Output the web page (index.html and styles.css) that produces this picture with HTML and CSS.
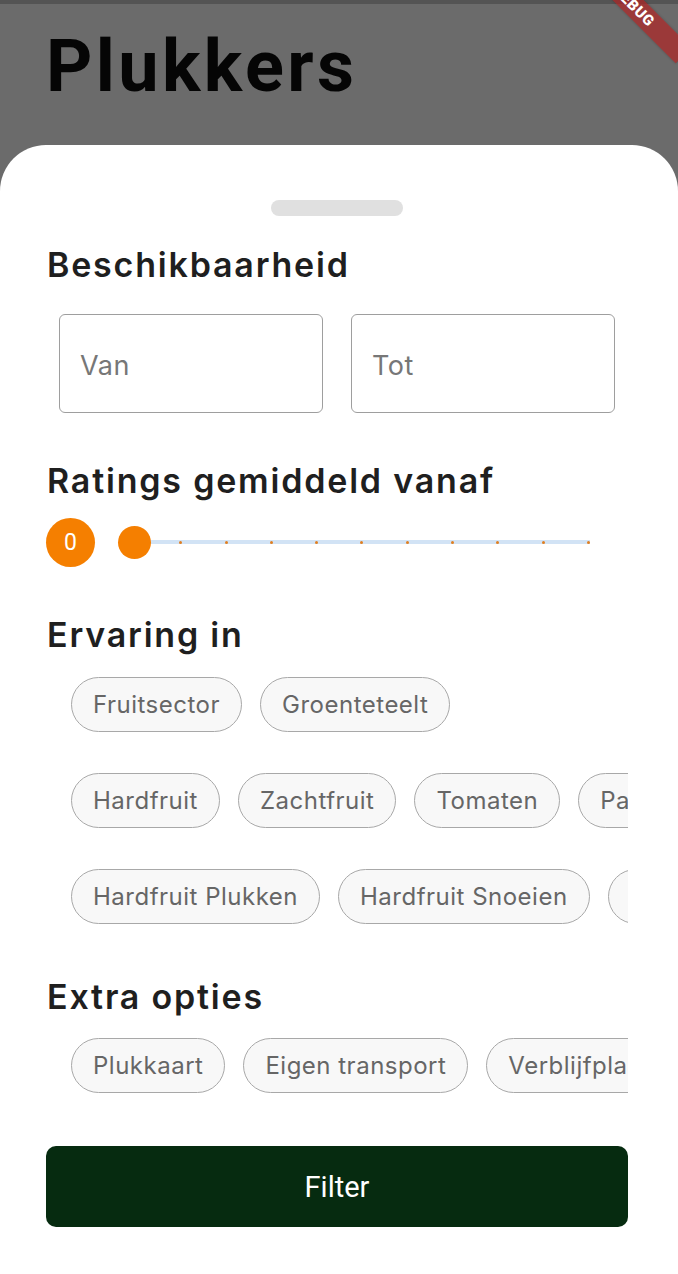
FILE: index.html
```html
<!DOCTYPE html>
<html lang="nl">
<head>
<meta charset="utf-8">
<title>Plukkers</title>
<link rel="stylesheet" href="styles.css">
</head>
<body>
<div class="screen">
  <header class="appbar">
    <h1 class="title">Plukkers</h1>
  </header>
  <div class="debug-banner">DEBUG</div>
  <section class="sheet">
    <div class="handle"></div>

    <h2 class="heading heading-first">Beschikbaarheid</h2>
    <div class="fields">
      <div class="field"><span class="placeholder">Van</span></div>
      <div class="field"><span class="placeholder">Tot</span></div>
    </div>

    <h2 class="heading heading-ratings">Ratings gemiddeld vanaf</h2>
    <div class="slider">
      <div class="bubble">0</div>
      <div class="track">
        <span class="tick"></span><span class="tick"></span><span class="tick"></span>
        <span class="tick"></span><span class="tick"></span><span class="tick"></span>
        <span class="tick"></span><span class="tick"></span><span class="tick"></span>
        <span class="tick"></span><span class="tick"></span>
        <div class="thumb"></div>
      </div>
    </div>

    <h2 class="heading heading-ervaring">Ervaring in</h2>
    <div class="chip-rows">
      <div class="chip-row">
        <span class="chip">Fruitsector</span>
        <span class="chip">Groenteteelt</span>
      </div>
      <div class="chip-row">
        <span class="chip">Hardfruit</span>
        <span class="chip">Zachtfruit</span>
        <span class="chip">Tomaten</span>
        <span class="chip">Paprika</span>
        <span class="chip">Komkommers</span>
      </div>
      <div class="chip-row">
        <span class="chip">Hardfruit Plukken</span>
        <span class="chip">Hardfruit Snoeien</span>
        <span class="chip chip-offscreen">Zachtfruit Plukken</span>
      </div>
    </div>

    <h2 class="heading heading-extra">Extra opties</h2>
    <div class="chip-row chip-row-extra">
      <span class="chip">Plukkaart</span>
      <span class="chip">Eigen transport</span>
      <span class="chip">Verblijfplaats</span>
    </div>

    <button class="filter-btn" type="button">Filter</button>
  </section>
</div>
</body>
</html>
```

FILE: styles.css
```css
* {
  box-sizing: border-box;
}

html, body {
  margin: 0;
  padding: 0;
}

body {
  width: 678px;
  height: 1274px;
  overflow: hidden;
  background: #6b6b6b;
  font-family: "Inter", "Noto Sans", sans-serif;
}

.screen {
  position: relative;
  width: 678px;
  height: 1274px;
  overflow: hidden;
  background: #6b6b6b;
  display: flex;
  flex-direction: column;
}

.appbar {
  height: 145px;
  flex: none;
  border-top: 4px solid #545454;
  padding-left: 46px;
}

.title {
  margin: 0;
  padding-top: 21px;
  font-family: "Roboto", "Liberation Sans", sans-serif;
  font-weight: 700;
  font-size: 72px;
  line-height: 84px;
  color: #050505;
  letter-spacing: 3.4px;
}

.debug-banner {
  position: absolute;
  left: 564px;
  top: -5px;
  width: 140px;
  height: 22px;
  line-height: 22px;
  text-align: center;
  transform: rotate(45deg);
  background: rgba(183, 28, 28, 0.63);
  color: #fff;
  font-family: "Roboto", "Liberation Sans", sans-serif;
  font-weight: 900;
  font-size: 15px;
  letter-spacing: 0.5px;
  box-shadow: 0 0 3px rgba(0, 0, 0, 0.2);
}

.sheet {
  flex: 1;
  background: #fff;
  border-radius: 46px 46px 0 0;
  padding: 0 50px 0 46px;
  display: flex;
  flex-direction: column;
}

.handle {
  width: 132px;
  height: 16px;
  margin: 55px auto 0;
  border-radius: 8px;
  background: #e0e0e0;
  flex: none;
}

.heading {
  margin: 0;
  padding-left: 1px;
  font-family: "Inter", "Noto Sans", sans-serif;
  font-weight: 600;
  font-size: 34px;
  line-height: 40px;
  color: #1f1f1f;
  letter-spacing: 1.8px;
  white-space: nowrap;
}

.heading-first {
  margin-top: 29px;
}

.heading-ratings {
  margin-top: 48px;
}

.heading-ervaring {
  margin-top: 48px;
}

.heading-extra {
  margin-top: 53px;
}

.fields {
  display: flex;
  gap: 28px;
  padding: 0 13px;
  margin-top: 29px;
}

.field {
  flex: 1;
  height: 99px;
  border: 1.5px solid #9e9e9e;
  border-radius: 6px;
  display: flex;
  align-items: center;
  padding-left: 20px;
}

.placeholder {
  font-family: "Inter", "Noto Sans", sans-serif;
  font-size: 27px;
  color: #777;
  padding-top: 4px;
  letter-spacing: 0.5px;
}

.slider {
  display: flex;
  align-items: center;
  margin-top: 16px;
  height: 50px;
}

.bubble {
  width: 49px;
  height: 49px;
  border-radius: 50%;
  background: #f57f00;
  color: #fff;
  display: flex;
  align-items: center;
  justify-content: center;
  font-family: "Roboto", "Liberation Sans", sans-serif;
  font-size: 23px;
  flex: none;
}

.track {
  position: relative;
  margin-left: 39px;
  width: 456px;
  height: 4px;
  background: #d2e3f5;
  display: flex;
  align-items: center;
  justify-content: space-between;
}

.tick {
  width: 3px;
  height: 3px;
  border-radius: 50%;
  background: #e07f22;
}

.thumb {
  position: absolute;
  left: -16px;
  top: -14px;
  width: 33px;
  height: 33px;
  border-radius: 50%;
  background: #f57f00;
}

.chip-rows {
  display: flex;
  flex-direction: column;
  gap: 41px;
  margin-top: 22px;
}

.chip-row {
  display: flex;
  gap: 18px;
  padding-left: 25px;
  overflow: hidden;
}

.chip-row-extra {
  margin-top: 21px;
}

.chip {
  flex: none;
  height: 55px;
  padding: 0 21px;
  border: 1.5px solid #a8a8a8;
  border-radius: 28px;
  background: #f8f8f8;
  display: flex;
  align-items: center;
  font-family: "Inter", "Noto Sans", sans-serif;
  font-size: 24px;
  color: #666;
  letter-spacing: 0.5px;
  white-space: nowrap;
}

.chip-offscreen {
  padding-left: 30px;
}

.filter-btn {
  margin-top: 53px;
  height: 81px;
  width: 100%;
  border: none;
  border-radius: 10px;
  background: #062b10;
  color: #fff;
  font-family: "Roboto", "Liberation Sans", sans-serif;
  font-size: 29px;
  padding: 0;
}
```
